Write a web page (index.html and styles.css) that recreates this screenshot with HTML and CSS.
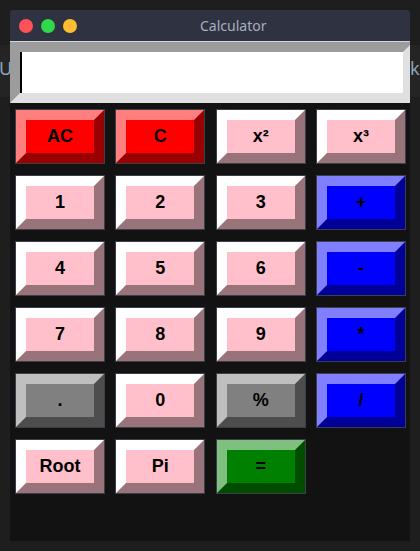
FILE: index.html
```html
<!DOCTYPE html>
<html>
<head>
<meta charset="utf-8">
<link rel="stylesheet" href="styles.css">
</head>
<body>
<div class="band"><span class="ghost-u">U</span><span class="ghost-k">k</span></div>
<div class="window">
  <div class="titlebar">
    <span class="dot red"></span>
    <span class="dot green"></span>
    <span class="dot yellow"></span>
    <span class="title">Calculator</span>
  </div>
  <div class="content">
    <div class="display"><span class="caret"></span></div>
    <div class="keys">
      <button class="key red"><span class="face">AC</span></button>
      <button class="key red"><span class="face">C</span></button>
      <button class="key pink"><span class="face">x²</span></button>
      <button class="key pink"><span class="face">x³</span></button>

      <button class="key pink"><span class="face">1</span></button>
      <button class="key pink"><span class="face">2</span></button>
      <button class="key pink"><span class="face">3</span></button>
      <button class="key blue"><span class="face">+</span></button>

      <button class="key pink"><span class="face">4</span></button>
      <button class="key pink"><span class="face">5</span></button>
      <button class="key pink"><span class="face">6</span></button>
      <button class="key blue"><span class="face">-</span></button>

      <button class="key pink"><span class="face">7</span></button>
      <button class="key pink"><span class="face">8</span></button>
      <button class="key pink"><span class="face">9</span></button>
      <button class="key blue"><span class="face">*</span></button>

      <button class="key gray"><span class="face">.</span></button>
      <button class="key pink"><span class="face">0</span></button>
      <button class="key gray"><span class="face">%</span></button>
      <button class="key blue"><span class="face">/</span></button>

      <button class="key pink"><span class="face">Root</span></button>
      <button class="key pink"><span class="face">Pi</span></button>
      <button class="key green"><span class="face">=</span></button>
    </div>
  </div>
</div>
</body>
</html>
```
FILE: styles.css
```css
* { box-sizing: border-box; }

html, body {
  margin: 0;
  padding: 0;
}

body {
  background: #1e1e1e;
  padding: 10px;
  width: 420px;
  height: 551px;
  overflow: hidden;
  position: relative;
  font-family: "Liberation Sans", Arial, sans-serif;
}

.band {
  position: absolute;
  left: 0;
  right: 0;
  top: 45px;
  height: 52px;
  background: #242424;
  font-family: "Noto Sans", sans-serif;
  font-size: 18px;
  color: #8fa3b8;
  z-index: 0;
}

.ghost-u {
  position: absolute;
  left: -1px;
  top: 11px;
}

.ghost-k {
  position: absolute;
  left: 410px;
  top: 11px;
}

.window {
  position: relative;
  z-index: 1;
  width: 400px;
  height: 531px;
  background: #121212;
  overflow: hidden;
  border-radius: 3px 3px 0 0;
}

.titlebar {
  height: 31px;
  background: #2f3341;
  display: flex;
  align-items: center;
  padding-left: 9px;
  gap: 8px;
}

.dot {
  width: 14px;
  height: 14px;
  border-radius: 50%;
  flex: none;
}

.dot.red { background: #ff5257; }
.dot.green { background: #30d94a; }
.dot.yellow { background: #fdbe2f; }

.title {
  margin-left: 115px;
  font-family: "Noto Sans", sans-serif;
  font-size: 14px;
  color: #a6afc0;
}

.content {
  border-top: 1px solid #d4d6da;
}

.display {
  width: 403px;
  height: 61px;
  background: #ffffff;
  border: 10px solid;
  border-color: #9c9c9c #e0e0e0 #e0e0e0 #9c9c9c;
  display: flex;
}

.caret {
  width: 2px;
  height: 100%;
  background: #000;
}

.keys {
  display: grid;
  grid-template-columns: repeat(4, 90px);
  grid-auto-rows: 55px;
  column-gap: 10.33px;
  row-gap: 11px;
  margin-top: 6px;
  padding-left: 5px;
}

.key {
  padding: 0;
  margin: 0;
  border: 1px solid #3b3f4b;
  background: none;
  display: flex;
  font-family: "Liberation Sans", Arial, sans-serif;
  font-weight: bold;
  font-size: 18px;
  color: #000;
}

.face {
  flex: 1;
  display: flex;
  align-items: center;
  justify-content: center;
  border: 10px solid;
}

.red .face {
  background: #ff0000;
  border-color: #ff7f7f #990000 #990000 #ff7f7f;
}

.pink .face {
  background: #ffc0cb;
  border-color: #ffffff #99737a #99737a #ffffff;
}

.gray .face {
  background: #808080;
  border-color: #bfbfbf #4d4d4d #4d4d4d #bfbfbf;
}

.blue .face {
  background: #0000ff;
  border-color: #7f7fff #000099 #000099 #7f7fff;
}

.green .face {
  background: #008000;
  border-color: #7fbf7f #004d00 #004d00 #7fbf7f;
}
```
